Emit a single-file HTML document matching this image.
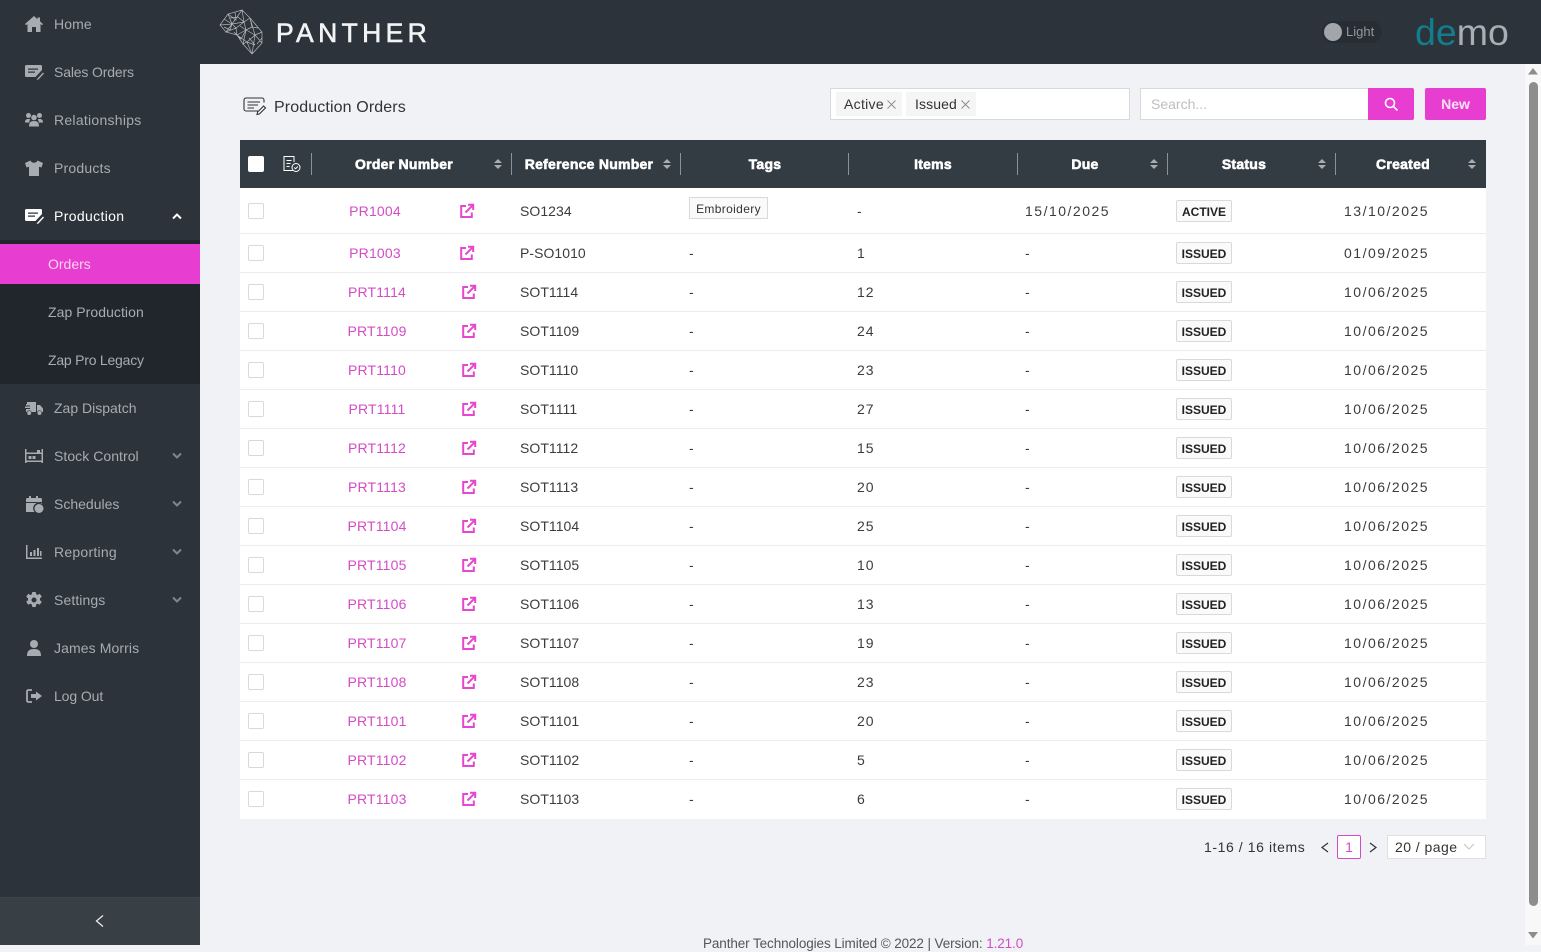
<!DOCTYPE html>
<html><head><meta charset="utf-8"><title>Production Orders</title>
<style>
*{box-sizing:border-box}
html,body{margin:0;padding:0;width:1541px;height:945px;overflow:hidden;background:#f0f2f5;font-family:"Liberation Sans",sans-serif;color:#333}
#side{position:absolute;left:0;top:0;width:200px;height:945px;background:#2c333a}
#sub{position:absolute;left:0;top:240px;width:200px;height:144px;background:#20262c}
#act{position:absolute;left:0;top:244px;width:200px;height:40px;background:#e83dd1}
.m{position:absolute;left:54px;height:20px;line-height:20px;font-size:14px;color:#a6acb1;white-space:nowrap}
.s{left:48px}
.ic{position:absolute;left:24px;width:20px;height:20px;fill:#a6acb1}
.ch{position:absolute;left:172px;width:10px;height:7px;fill:none;stroke:#7f868c;stroke-width:2}
#bot{position:absolute;left:0;top:897px;width:200px;height:48px;background:#384046;border-top:1px solid #3c454b}
#top{position:absolute;left:200px;top:0;width:1341px;height:64px;background:#2c333b}
.r{position:absolute;left:240px;width:1246px;background:#fff;border-bottom:1px solid #ececec;font-size:14px;color:#3c3c3c}
.r>span{position:absolute;top:0;white-space:nowrap;letter-spacing:.95px}
.r>i{position:absolute;left:8px;top:50%;margin-top:-8px;width:16px;height:16px;background:#fff;border:1px solid #d9d9d9;border-radius:2px}
.r>b{position:absolute;left:936px;top:50%;margin-top:-11px;width:56px;height:22px;line-height:22px;text-align:center;font-size:12px;font-weight:bold;color:#222;background:#fafafa;border:1px solid #d9d9d9;border-radius:2px}
.r>svg{position:absolute;top:50%;margin-top:-8px;width:16px;height:16px;fill:none;stroke:#e746cf;stroke-width:2}
.r>span.a{left:280px;letter-spacing:.05px}.t{left:449px}.n{left:617px}.r>span.d{left:785px;letter-spacing:1.5px}.r>span.c{left:1104px;letter-spacing:1.5px}
.r>span.l{color:#d44cc5;width:100px;text-align:center;letter-spacing:.18px}
#th{position:absolute;left:240px;top:140px;width:1246px;height:48px;background:#343c43}
.h{position:absolute;top:140px;height:48px;line-height:48px;color:#fff;font-weight:bold;font-size:14px;letter-spacing:.25px;text-align:center;width:160px;-webkit-text-stroke:.6px #fff}
.sep{position:absolute;top:153px;width:1px;height:22px;background:#8b9196}
.so{position:absolute;top:159px;width:8px;height:10px;fill:#a9adb1}
.chip{position:absolute;top:92px;height:24px;line-height:24px;background:#f5f5f5;font-size:14px;letter-spacing:.3px;padding-left:8px;color:#333}
</style></head><body>
<svg width="0" height="0" style="position:absolute">
<defs>
<symbol id="ext" viewBox="0 0 16 16"><path d="M7 3H2.2v11h10.6V9.5"/><path d="M6.5 9.5L14 2M9 1.8h5.2V7"/></symbol>
<symbol id="sort" viewBox="0 0 8 10"><path d="M4 0l4 4H0zM0 6h8l-4 4z"/></symbol>
<symbol id="order" viewBox="0 0 20 20"><path d="M2.5 3h14A1.5 1.5 0 0 1 18 4.500V8l-6.500 7H2.500A1.500 1.500 0 0 1 1 13.500v-9A1.500 1.500 0 0 1 2.500 3zM4 6.500v1.300h10V6.500zM4 9.500v1.300h7V9.500zM13.500 16.500l5.500-6 1 1-5.500 6-2 .5z" fill-rule="evenodd"/></symbol>
</defs></svg>

<div id="side">
<div id="sub"></div><div id="act"></div>
<svg class="ic" style="top:14px" viewBox="0 0 20 20"><path d="M10 2L1 10l1 1.200 1.500-1.200v8h4.500v-5h4v5h4.500v-8L18 11.200 19 10l-3-2.600V3.500h-2.500v1.700z"/></svg>
<svg class="ic" style="top:62px"><use href="#order"/></svg>
<svg class="ic" style="top:110px" viewBox="0 0 20 20"><circle cx="4.500" cy="5.500" r="2.500"/><circle cx="15.500" cy="5.500" r="2.500"/><circle cx="10" cy="7.500" r="2.800"/><path d="M1 12.500C1 9.500 2.500 9 4.500 9c1 0 1.500.3 1.800.6-.8.8-1 2-1 3zM19 12.500c0-3-1.500-3.500-3.500-3.500-1 0-1.500.3-1.800.6.800.8 1 2 1 3zM5 16.500c0-4 1.500-5.500 5-5.500s5 1.500 5 5.500z"/></svg>
<svg class="ic" style="top:158px" viewBox="0 0 20 20"><path d="M6.500 2.500L1 5l1.500 4.500 2.500-.7V18h10V8.800l2.500.7L19 5l-5.500-2.500c-.5 1.500-2 2.200-3.500 2.200S7 4 6.500 2.500z"/></svg>
<svg class="ic" style="top:206px;fill:#fff"><use href="#order"/></svg>
<svg class="ic" style="top:398px" viewBox="0 0 20 20"><path d="M3 4h9v10H7.500a2.500 2.500 0 0 0-4.700 0H2v-3h4v-1H1V8.500h5v-1H2V6h1zM13 7h3l3 3.500V14h-1.200a2.500 2.500 0 0 0-4.700 0H13z"/><circle cx="5.200" cy="15" r="2"/><circle cx="15.500" cy="15" r="2"/></svg>
<svg class="ic" style="top:446px" viewBox="0 0 20 20"><path d="M1 3h1.500v14H1zM17.500 3H19v14h-1.500zM2.500 6.500h15V8h-15zM2.500 14.500h15V16h-15zM4.500 10h3v3h-3zM8.500 10h3v3h-3zM13 4h3v2.500h-3z"/></svg>
<svg class="ic" style="top:494px" viewBox="0 0 20 20"><path d="M5 2h2v2h5V2h2v2h2.500A1.500 1.500 0 0 1 18 5.500V8H2V5.500A1.500 1.500 0 0 1 3.500 4H5zM2 9h16v1a5.500 5.500 0 0 0-7.500 8H2z"/><circle cx="15" cy="14.500" r="4.500"/></svg>
<svg class="ic" style="top:542px" viewBox="0 0 20 20"><path d="M2 3h1.500v12.500H18V17H2zM6 10h2v4H6zM9.500 8h2v6h-2zM13 6h2v8h-2zM16 9h1.500v5H16z"/></svg>
<svg class="ic" style="top:590px" viewBox="0 0 20 20"><path fill-rule="evenodd" d="M8.300 2h3.400l.5 2.300 1.500.7 2.100-1.200 2 3-1.800 1.500v2l1.800 1.500-2 3-2.100-1.100-1.500.7-.5 2.600H8.300l-.5-2.600-1.500-.7-2.100 1.100-2-3 1.800-1.500v-2L2.200 6.800l2-3 2.100 1.200 1.500-.7zM10 7.500a2.500 2.500 0 1 0 0 5 2.500 2.500 0 0 0 0-5z"/></svg>
<svg class="ic" style="top:638px" viewBox="0 0 20 20"><circle cx="10" cy="6" r="4"/><path d="M3 18c0-5 2-7 7-7s7 2 7 7z"/></svg>
<svg class="ic" style="top:686px" viewBox="0 0 20 20"><path d="M8 4H4.500A1.500 1.500 0 0 0 3 5.500v9A1.500 1.500 0 0 0 4.500 16H8" fill="none" stroke="#a6acb1" stroke-width="1.800"/><path d="M12 5.500l6 4.500-6 4.500V12H7V8h5z"/></svg>

<div class="m" style="top:14px;letter-spacing:.1px">Home</div>
<div class="m" style="top:62px;letter-spacing:-.15px">Sales Orders</div>
<div class="m" style="top:110px;letter-spacing:.27px">Relationships</div>
<div class="m" style="top:158px;letter-spacing:.2px">Products</div>
<div class="m" style="top:206px;color:#fff;letter-spacing:.35px">Production</div>
<div class="m s" style="top:254px;color:#fbd3f4">Orders</div>
<div class="m s" style="top:302px;letter-spacing:.06px">Zap Production</div>
<div class="m s" style="top:350px;letter-spacing:-.22px">Zap Pro Legacy</div>
<div class="m" style="top:398px">Zap Dispatch</div>
<div class="m" style="top:446px;letter-spacing:.05px">Stock Control</div>
<div class="m" style="top:494px">Schedules</div>
<div class="m" style="top:542px;letter-spacing:.25px">Reporting</div>
<div class="m" style="top:590px;letter-spacing:.1px">Settings</div>
<div class="m" style="top:638px;letter-spacing:.1px">James Morris</div>
<div class="m" style="top:686px;letter-spacing:-.1px">Log Out</div>
<svg class="ch" style="top:213px;stroke:#fff" viewBox="0 0 10 7"><path d="M1 5.500l4-4 4 4"/></svg>
<svg class="ch" style="top:452px" viewBox="0 0 10 7"><path d="M1 1.500l4 4 4-4"/></svg>
<svg class="ch" style="top:500px" viewBox="0 0 10 7"><path d="M1 1.500l4 4 4-4"/></svg>
<svg class="ch" style="top:548px" viewBox="0 0 10 7"><path d="M1 1.500l4 4 4-4"/></svg>
<svg class="ch" style="top:596px" viewBox="0 0 10 7"><path d="M1 1.500l4 4 4-4"/></svg>
<div id="bot"><svg style="position:absolute;left:94px;top:16px" width="12" height="14" viewBox="0 0 12 14" fill="none" stroke="#e8eaeb" stroke-width="1.300"><path d="M9 1.500L2.500 7 9 12.500"/></svg></div>
</div>

<div id="top"></div>
<svg style="position:absolute;left:0;top:0" width="280" height="64" fill="none" stroke="#b4b8bc" stroke-width=".7"><path d="M220 25L228 14 242 10 250 18 262 32 262 43 252 54 243 44 237 35 226 32zM228 14L232 24 242 10 244 22 250 18 255 35 262 32M220 25L232 24 226 32 236 28 237 35 246 30 244 22 232 24 236 28 244 22M246 30L255 35 247 42 243 44 246 30M255 35L262 43 252 54 247 42M237 35L247 42M224 19L232 24M235 12L236 20 228 14M252 54L255 35M224 27L230 30 232 24M230 18L238 17 244 22M250 18L252 27 246 30M258 28L252 27M240 26L246 30M234 32L241 39 246 30M249 38L255 45 247 42M257 44L262 38"/></svg>
<div style="position:absolute;left:276px;top:17px;height:32px;line-height:32px;font-size:26.500px;letter-spacing:4.350px;color:#f2f3f4;white-space:nowrap;-webkit-text-stroke:.6px #f2f3f4">PANTHER</div>
<div style="position:absolute;left:1322px;top:21px;width:60px;height:22px;border-radius:11px;background:#272d34"></div>
<div style="position:absolute;left:1324px;top:23px;width:18px;height:18px;border-radius:50%;background:#a2a5a9"></div>
<div style="position:absolute;left:1346px;top:22px;line-height:20px;font-size:13px;color:#93989c">Light</div>
<div style="position:absolute;left:1415px;top:10px;line-height:44px;font-size:37.500px;white-space:nowrap;color:#a9b0b5"><span style="color:#127d8d">de</span>mo</div>

<svg style="position:absolute;left:243px;top:97px" width="24" height="20" viewBox="0 0 24 20" fill="none" stroke="#333" stroke-width="1.100"><path d="M15 14H3a2 2 0 0 1-2-2V3a2 2 0 0 1 2-2h16a2 2 0 0 1 2 2v2.500M4.500 5H17M4.500 8H15M4.500 11H11M14 17.500l.6-2.500 6-6 1.900 1.900-6 6z"/></svg>
<div style="position:absolute;left:274px;top:97px;line-height:21px;font-size:16px;letter-spacing:.12px;color:#333;white-space:nowrap">Production Orders</div>

<div style="position:absolute;left:830px;top:88px;width:300px;height:32px;background:#fff;border:1px solid #d9d9d9"></div>
<div class="chip" style="left:836px;width:66px">Active<svg style="position:absolute;left:51px;top:8px" width="9" height="9" fill="none" stroke="#888" stroke-width=".9"><path d="M.5.500l8 8M8.500.500l-8 8"/></svg></div>
<div class="chip" style="left:906px;width:70px;padding-left:9px;letter-spacing:.1px">Issued<svg style="position:absolute;left:55px;top:8px" width="9" height="9" fill="none" stroke="#888" stroke-width=".9"><path d="M.5.500l8 8M8.500.500l-8 8"/></svg></div>
<div style="position:absolute;left:1140px;top:88px;width:229px;height:32px;background:#fff;border:1px solid #d9d9d9;padding-left:10px;line-height:30px;font-size:14px;color:#bfbfbf">Search...</div>
<div style="position:absolute;left:1368px;top:88px;width:46px;height:32px;background:#e83dd1;border-radius:0 2px 2px 0"><svg style="position:absolute;left:16px;top:9px" width="14" height="14" fill="none" stroke="#fff" stroke-width="1.600"><circle cx="6" cy="6" r="4.500"/><path d="M9.500 9.500L13.500 13.500"/></svg></div>
<div style="position:absolute;left:1425px;top:88px;width:61px;height:32px;background:#e83dd1;border-radius:2px;color:#fbe3f7;font-weight:bold;font-size:14px;line-height:32px;text-align:center">New</div>

<div id="th"></div>
<div style="position:absolute;left:248px;top:156px;width:16px;height:16px;background:#fff;border-radius:2px"></div>
<svg style="position:absolute;left:282px;top:155px" width="20" height="18" fill="none" stroke="#fff" stroke-width="1"><path d="M11 15.500H2V1.500h10V7M4.500 5.500h5M4.500 8.500h4M4.500 11.500h3"/><circle cx="14" cy="12.500" r="4"/><path d="M12.300 12.500l1.300 1.300 2.200-2.300"/></svg>
<div class="sep" style="left:311px"></div><div class="sep" style="left:511px"></div><div class="sep" style="left:680px"></div><div class="sep" style="left:848px"></div><div class="sep" style="left:1017px"></div><div class="sep" style="left:1167px"></div><div class="sep" style="left:1335px"></div>
<div class="h" style="left:324px">Order Number</div>
<div class="h" style="left:509px">Reference Number</div>
<div class="h" style="left:685px">Tags</div>
<div class="h" style="left:853px">Items</div>
<div class="h" style="left:1005px">Due</div>
<div class="h" style="left:1164px">Status</div>
<div class="h" style="left:1323px">Created</div>
<svg class="so" style="left:494px"><use href="#sort"/></svg>
<svg class="so" style="left:663px"><use href="#sort"/></svg>
<svg class="so" style="left:1150px"><use href="#sort"/></svg>
<svg class="so" style="left:1318px"><use href="#sort"/></svg>
<svg class="so" style="left:1468px"><use href="#sort"/></svg>

<div class="r" style="top:188px;height:46px;line-height:46px"><i></i><span class="l" style="left:85px">PR1004</span><svg style="left:219px"><use href="#ext"/></svg><span class="a">SO1234</span><div style="position:absolute;left:449px;top:9px;width:79px;height:22px;line-height:23px;background:#fafafa;border:1px solid #d9d9d9;font-size:12px;letter-spacing:.35px;text-align:center;color:#333">Embroidery</div><span class="n">-</span><span class="d">15/10/2025</span><b>ACTIVE</b><span class="c">13/10/2025</span></div>
<div class="r" style="top:234px;height:39px;line-height:39px"><i></i><span class="l" style="left:85px">PR1003</span><svg style="left:219px"><use href="#ext"/></svg><span class="a">P-SO1010</span><span class="t">-</span><span class="n">1</span><span class="d">-</span><b>ISSUED</b><span class="c">01/09/2025</span></div>
<div class="r" style="top:273px;height:39px;line-height:39px"><i></i><span class="l" style="left:87px">PRT1114</span><svg style="left:221px"><use href="#ext"/></svg><span class="a">SOT1114</span><span class="t">-</span><span class="n">12</span><span class="d">-</span><b>ISSUED</b><span class="c">10/06/2025</span></div>
<div class="r" style="top:312px;height:39px;line-height:39px"><i></i><span class="l" style="left:87px">PRT1109</span><svg style="left:221px"><use href="#ext"/></svg><span class="a">SOT1109</span><span class="t">-</span><span class="n">24</span><span class="d">-</span><b>ISSUED</b><span class="c">10/06/2025</span></div>
<div class="r" style="top:351px;height:39px;line-height:39px"><i></i><span class="l" style="left:87px">PRT1110</span><svg style="left:221px"><use href="#ext"/></svg><span class="a">SOT1110</span><span class="t">-</span><span class="n">23</span><span class="d">-</span><b>ISSUED</b><span class="c">10/06/2025</span></div>
<div class="r" style="top:390px;height:39px;line-height:39px"><i></i><span class="l" style="left:87px">PRT1111</span><svg style="left:221px"><use href="#ext"/></svg><span class="a">SOT1111</span><span class="t">-</span><span class="n">27</span><span class="d">-</span><b>ISSUED</b><span class="c">10/06/2025</span></div>
<div class="r" style="top:429px;height:39px;line-height:39px"><i></i><span class="l" style="left:87px">PRT1112</span><svg style="left:221px"><use href="#ext"/></svg><span class="a">SOT1112</span><span class="t">-</span><span class="n">15</span><span class="d">-</span><b>ISSUED</b><span class="c">10/06/2025</span></div>
<div class="r" style="top:468px;height:39px;line-height:39px"><i></i><span class="l" style="left:87px">PRT1113</span><svg style="left:221px"><use href="#ext"/></svg><span class="a">SOT1113</span><span class="t">-</span><span class="n">20</span><span class="d">-</span><b>ISSUED</b><span class="c">10/06/2025</span></div>
<div class="r" style="top:507px;height:39px;line-height:39px"><i></i><span class="l" style="left:87px">PRT1104</span><svg style="left:221px"><use href="#ext"/></svg><span class="a">SOT1104</span><span class="t">-</span><span class="n">25</span><span class="d">-</span><b>ISSUED</b><span class="c">10/06/2025</span></div>
<div class="r" style="top:546px;height:39px;line-height:39px"><i></i><span class="l" style="left:87px">PRT1105</span><svg style="left:221px"><use href="#ext"/></svg><span class="a">SOT1105</span><span class="t">-</span><span class="n">10</span><span class="d">-</span><b>ISSUED</b><span class="c">10/06/2025</span></div>
<div class="r" style="top:585px;height:39px;line-height:39px"><i></i><span class="l" style="left:87px">PRT1106</span><svg style="left:221px"><use href="#ext"/></svg><span class="a">SOT1106</span><span class="t">-</span><span class="n">13</span><span class="d">-</span><b>ISSUED</b><span class="c">10/06/2025</span></div>
<div class="r" style="top:624px;height:39px;line-height:39px"><i></i><span class="l" style="left:87px">PRT1107</span><svg style="left:221px"><use href="#ext"/></svg><span class="a">SOT1107</span><span class="t">-</span><span class="n">19</span><span class="d">-</span><b>ISSUED</b><span class="c">10/06/2025</span></div>
<div class="r" style="top:663px;height:39px;line-height:39px"><i></i><span class="l" style="left:87px">PRT1108</span><svg style="left:221px"><use href="#ext"/></svg><span class="a">SOT1108</span><span class="t">-</span><span class="n">23</span><span class="d">-</span><b>ISSUED</b><span class="c">10/06/2025</span></div>
<div class="r" style="top:702px;height:39px;line-height:39px"><i></i><span class="l" style="left:87px">PRT1101</span><svg style="left:221px"><use href="#ext"/></svg><span class="a">SOT1101</span><span class="t">-</span><span class="n">20</span><span class="d">-</span><b>ISSUED</b><span class="c">10/06/2025</span></div>
<div class="r" style="top:741px;height:39px;line-height:39px"><i></i><span class="l" style="left:87px">PRT1102</span><svg style="left:221px"><use href="#ext"/></svg><span class="a">SOT1102</span><span class="t">-</span><span class="n">5</span><span class="d">-</span><b>ISSUED</b><span class="c">10/06/2025</span></div>
<div class="r" style="top:780px;height:39px;line-height:39px;border-bottom-color:#fff"><i></i><span class="l" style="left:87px">PRT1103</span><svg style="left:221px"><use href="#ext"/></svg><span class="a">SOT1103</span><span class="t">-</span><span class="n">6</span><span class="d">-</span><b>ISSUED</b><span class="c">10/06/2025</span></div>

<div style="position:absolute;left:1204px;top:837px;line-height:20px;font-size:14px;letter-spacing:.58px;color:#333;white-space:nowrap">1-16 / 16 items</div>
<svg style="position:absolute;left:1320px;top:842px" width="10" height="11" fill="none" stroke="#333" stroke-width="1.200"><path d="M8 1L2 5.500 8 10"/></svg>
<div style="position:absolute;left:1337px;top:835px;width:24px;height:24px;background:#fff;border:1px solid #d44cc5;border-radius:2px;line-height:22px;text-align:center;font-size:14px;color:#d44cc5">1</div>
<svg style="position:absolute;left:1368px;top:842px" width="10" height="11" fill="none" stroke="#333" stroke-width="1.200"><path d="M2 1l6 4.500L2 10"/></svg>
<div style="position:absolute;left:1387px;top:835px;width:99px;height:24px;background:#fff;border:1px solid #e0e0e0;padding-left:7px;line-height:22px;font-size:14px;letter-spacing:.45px;color:#333;white-space:nowrap">20 / page<svg style="position:absolute;left:75px;top:7px" width="12" height="8" fill="none" stroke="#c4c4c4"><path d="M1 1l5 5 5-5"/></svg></div>

<div style="position:absolute;left:703px;top:936px;line-height:16px;font-size:13.500px;letter-spacing:-.1px;color:#555;white-space:nowrap">Panther Technologies Limited © 2022 | Version: <span style="color:#d44cc5">1.21.0</span></div>

<div style="position:absolute;left:1525px;top:64px;width:16px;height:881px;background:#f8f8f9"></div>
<div style="position:absolute;left:1529px;top:82px;width:9px;height:824px;border-radius:5px;background:#8d8d8d"></div>
<svg style="position:absolute;left:1528px;top:68px" width="10" height="7" fill="#8d8d8d"><path d="M5 0l5 6.500H0z"/></svg>
<svg style="position:absolute;left:1528px;top:932px" width="10" height="7" fill="#8d8d8d"><path d="M0 0h10L5 6.500z"/></svg>
</body></html>
